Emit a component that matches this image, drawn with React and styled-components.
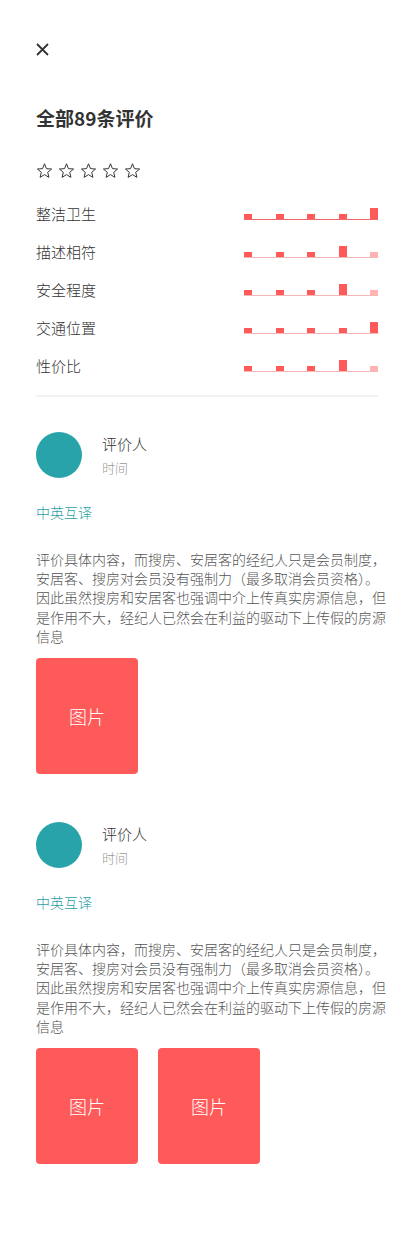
import React from 'react'
import styled, {createGlobalStyle} from 'styled-components'

const GlobalStyle = createGlobalStyle`
  body {
    margin: 0;
    background: #fff;
    font-family: "Noto Sans CJK SC", "Noto Sans", sans-serif;
    font-weight: 300;
    color: #333;
  }
`

const Page = styled.div`
  width: 414px;
  box-sizing: border-box;
  padding: 43px 36px 86px;
`

const CloseIcon = styled.svg`
  display: block;
  width: 13px;
  height: 13px;
`

const Title = styled.h1`
  margin: 48px 0 0;
  font-size: 19px;
  line-height: 28px;
  font-weight: 700;
  color: #333;
`

const Stars = styled.div`
  display: flex;
  gap: 5px;
  margin-top: 30px;
`

const Star = styled.svg`
  width: 17px;
  height: 17px;
  display: block;
`

const Ratings = styled.div`
  margin-top: 15px;
`

const RatingRow = styled.div`
  display: flex;
  align-items: center;
  justify-content: space-between;
  height: 38px;
`

const Label = styled.span`
  font-size: 15px;
  color: #333;
`

const Chart = styled.div`
  display: flex;
  align-items: flex-end;
  justify-content: space-between;
  width: 134px;
  height: 12px;
  margin-top: 2px;
  box-sizing: border-box;
  border-bottom: 1px solid ${(props) => props.dark ? '#ee6a6a' : '#f6b6b6'};
`

const Bar = styled.span`
  width: 8px;
  height: ${(props) => props.tall ? '11px' : '5px'};
  background: ${(props) => props.faded ? '#ffb3b3' : '#ff5a5a'};
`

const Divider = styled.hr`
  margin: 11px 0 0;
  border: none;
  height: 2px;
  background: #f1f3f3;
`

const Review = styled.section`
  margin-top: ${(props) => props.first ? '35px' : '48px'};
`

const Author = styled.div`
  display: flex;
  gap: 20px;
`

const Avatar = styled.div`
  width: 46px;
  height: 46px;
  border-radius: 50%;
  background: #27a3a9;
  flex-shrink: 0;
`

const AuthorInfo = styled.div`
  display: flex;
  flex-direction: column;
  padding-top: 1px;
`

const Name = styled.span`
  font-size: 15px;
  line-height: 22px;
  color: #333;
`

const Time = styled.span`
  font-size: 13px;
  line-height: 20px;
  margin-top: 3px;
  color: #999;
`

const Translate = styled.div`
  margin-top: 24px;
  font-size: 14px;
  line-height: 20px;
  color: #2aa0a6;
`

const Content = styled.p`
  margin: 28px -14px 0 0;
  font-size: 14px;
  line-height: 19.2px;
  color: #555;
`

const Photos = styled.div`
  display: flex;
  gap: 20px;
  margin-top: 12px;
`

const Photo = styled.div`
  width: 102px;
  height: 116px;
  border-radius: 4px;
  background: #ff5a5a;
  color: #fff;
  font-size: 18px;
  display: flex;
  align-items: center;
  justify-content: center;
`

const ratings = [
  {label: '整洁卫生', tall: 4, faded: [], dark: true},
  {label: '描述相符', tall: 3, faded: [4]},
  {label: '安全程度', tall: 3, faded: [4]},
  {label: '交通位置', tall: 4, faded: []},
  {label: '性价比', tall: 3, faded: [4]},
]

const text = '评价具体内容，而搜房、安居客的经纪人只是会员制度，安居客、搜房对会员没有强制力（最多取消会员资格）。因此虽然搜房和安居客也强调中介上传真实房源信息，但是作用不大，经纪人已然会在利益的驱动下上传假的房源信息'

const reviews = [{photos: 1}, {photos: 2}]

const StarOutline = () => (
  <Star viewBox="0 0 24 24">
    <path
      d="M12 2.5l2.8 6.9 7.2.5-5.5 4.7 1.7 7.1L12 17.8l-6.2 3.9 1.7-7.1L2 9.9l7.2-.5z"
      fill="none"
      stroke="#333"
      strokeWidth="1.4"
      strokeLinejoin="miter"
    />
  </Star>
)

const App = () => (
  <Page>
    <GlobalStyle />
    <CloseIcon viewBox="0 0 13 13">
      <path d="M1 1l11 11M12 1L1 12" stroke="#333" strokeWidth="1.8" />
    </CloseIcon>
    <Title>全部89条评价</Title>
    <Stars>
      {[0, 1, 2, 3, 4].map((i) => <StarOutline key={i} />)}
    </Stars>
    <Ratings>
      {ratings.map((r) => (
        <RatingRow key={r.label}>
          <Label>{r.label}</Label>
          <Chart dark={r.dark}>
            {[0, 1, 2, 3, 4].map((i) => (
              <Bar key={i} tall={i === r.tall} faded={r.faded.includes(i)} />
            ))}
          </Chart>
        </RatingRow>
      ))}
    </Ratings>
    <Divider />
    {reviews.map((review, i) => (
      <Review key={i} first={i === 0}>
        <Author>
          <Avatar />
          <AuthorInfo>
            <Name>评价人</Name>
            <Time>时间</Time>
          </AuthorInfo>
        </Author>
        <Translate>中英互译</Translate>
        <Content>{text}</Content>
        <Photos>
          {Array.from({length: review.photos}).map((_, j) => (
            <Photo key={j}>图片</Photo>
          ))}
        </Photos>
      </Review>
    ))}
  </Page>
)

export default App
